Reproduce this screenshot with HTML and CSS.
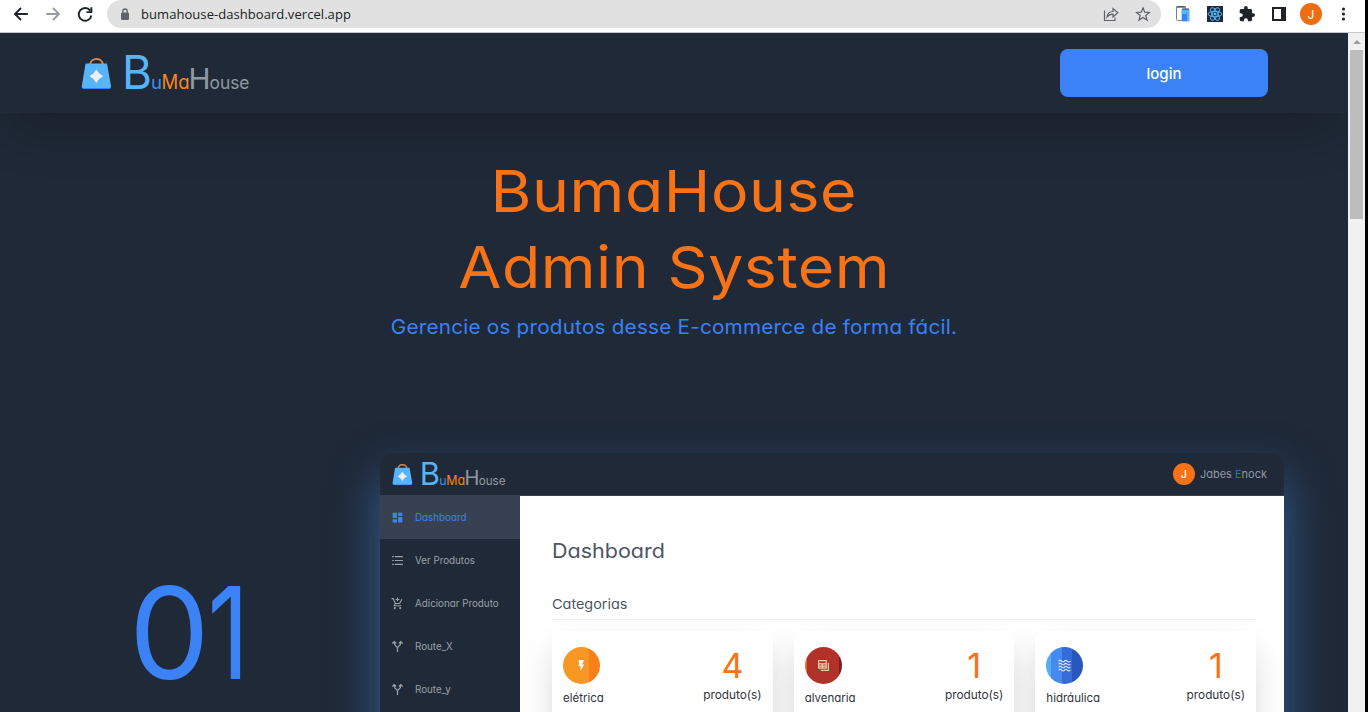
FILE: index.html
```html
<!DOCTYPE html>
<html lang="pt-BR">
<head>
<meta charset="utf-8">
<title>BumaHouse</title>
<link rel="stylesheet" href="styles.css">
</head>
<body>
<div class="window">
  <div class="view">
    <div class="toolbar">
      <svg class="nav" viewBox="0 0 24 24"><path d="M21 12H4M12 4l-8 8 8 8"/></svg>
      <svg class="nav off" viewBox="0 0 24 24"><path d="M3 12h17M12 4l8 8-8 8"/></svg>
      <svg class="nav" viewBox="0 0 24 24"><path d="M19 7.500A8.500 8.500 0 1 0 20.500 14M20.500 3v6.500H14"/></svg>
      <div class="address">
        <svg class="lock" viewBox="0 0 10 13"><rect x="1" y="4.500" width="8" height="7.500" rx="1" fill="#5f6368"/><path d="M2.800 5V3.200a2.200 2.200 0 0 1 4.400 0V5" fill="none" stroke="#5f6368" stroke-width="1.300"/></svg>
        <span class="url">bumahouse-dashboard.vercel.app</span>
        <svg class="tool" viewBox="0 0 16 16"><path d="M1.500 4.500v10h10.500v-3M4 11c.500-4 3-5.500 6-5.500V2.500l4.800 4.300L10 11V8.200C7.500 8.200 5.500 9 4 11z"/></svg>
        <svg class="tool" viewBox="0 0 16 16"><path d="M8 1.800l1.700 4.400 4.700.3-3.600 3 1.200 4.600L8 11.500l-4 2.600 1.200-4.600-3.600-3 4.700-.3z"/></svg>
      </div>
      <div class="extensions">
        <svg viewBox="0 0 16 16"><rect x="1.500" y=".5" width="9" height="14" rx="1" fill="#fff" stroke="#7a8087"/><path d="M1.500 1h9" stroke="#38434d" stroke-width="1.200"/><rect x="6.500" y="3" width="8" height="12.500" rx="1" fill="#57b4f7"/><path d="M7 8v7h5V8" fill="#3b82f6"/><path d="M7 3h7" stroke="#38434d"/></svg>
        <svg viewBox="0 0 16 16"><rect width="16" height="16" fill="#1f2937"/><g fill="none" stroke="#57b4f7" stroke-width="1"><ellipse cx="8" cy="8" rx="7" ry="2.700"/><ellipse cx="8" cy="8" rx="7" ry="2.700" transform="rotate(60 8 8)"/><ellipse cx="8" cy="8" rx="7" ry="2.700" transform="rotate(120 8 8)"/></g><circle cx="8" cy="8" r="1.400" fill="#57b4f7"/></svg>
        <svg viewBox="1 1 22 22"><path fill="#1f2328" d="M20.500 11H19V7c0-1.100-.9-2-2-2h-4V3.500a2.500 2.500 0 0 0-5 0V5H4c-1.100 0-2 .9-2 2v3.800h1.500a2.700 2.700 0 0 1 0 5.400H2V20c0 1.100.9 2 2 2h3.800v-1.500a2.700 2.700 0 0 1 5.400 0V22H17c1.100 0 2-.9 2-2v-4h1.500a2.500 2.500 0 0 0 0-5z"/></svg>
        <svg viewBox="0 0 16 16"><rect x="2" y="2" width="12" height="12" fill="#fff" stroke="#1f2328" stroke-width="2"/><path d="M10 1h5v14h-5z" fill="#1f2328"/></svg>
        <span class="avatar chrome">J</span>
        <svg viewBox="0 0 16 16" fill="#1f2328"><circle cx="8.500" cy="3" r="1.600"/><circle cx="8.500" cy="8" r="1.600"/><circle cx="8.500" cy="13" r="1.600"/></svg>
      </div>
    </div>
    <div class="content">
      <div class="page">
        <header class="header">
          <svg class="brand" viewBox="0 0 172 40">
            <path d="M12 13C12.500 5 24.500 5 25 13" fill="none" stroke="#d9874b" stroke-width="2"/>
            <path d="M7.500 11.500H29L33 34Q33 37 30 37H6.500Q3.500 37 3.800 34Z" fill="#57b4f7"/>
            <path d="M5 36.500H32" stroke="#3b82f6"/>
            <path d="M18.300 17.500Q20.500 22 25.200 24.300Q20.500 26.500 18.300 31Q16 26.500 11.500 24.300Q16 22 18.300 17.500Z" fill="#eceef1"/>
            <text x="44" y="37" font-size="46" class="wb" textLength="30" lengthAdjust="spacingAndGlyphs">B</text>
            <text x="73" y="37" font-size="18" class="wu" textLength="11" lengthAdjust="spacingAndGlyphs">u</text>
            <text x="83.500" y="37" font-size="19.500" class="wm" textLength="28" lengthAdjust="spacingAndGlyphs">Ma</text>
            <text x="110.500" y="37" font-size="29" class="wh" textLength="22" lengthAdjust="spacingAndGlyphs">H</text>
            <text x="131.500" y="37" font-size="18" class="wh" textLength="40" lengthAdjust="spacingAndGlyphs">ouse</text>
          </svg>
          <button class="login">login</button>
        </header>
        <section class="hero">
          <h1><span class="l1">BumaHouse</span><span class="l2">Admin System</span></h1>
          <p>Gerencie os produtos desse E-commerce de forma fácil.</p>
        </section>
        <section class="feature">
          <div class="step"><span>0</span><span class="one">1</span></div>
          <div class="mock">
            <div class="mock-head">
              <svg class="brand-small" viewBox="0 0 172 40">
                <path d="M12 13C12.500 5 24.500 5 25 13" fill="none" stroke="#d9874b" stroke-width="2"/>
                <path d="M7.500 11.500H29L33 34Q33 37 30 37H6.500Q3.500 37 3.800 34Z" fill="#57b4f7"/>
                <path d="M5 36.500H32" stroke="#3b82f6"/>
                <path d="M18.300 17.500Q20.500 22 25.200 24.300Q20.500 26.500 18.300 31Q16 26.500 11.500 24.300Q16 22 18.300 17.500Z" fill="#eceef1"/>
                <text x="44" y="37" font-size="46" class="wb" textLength="30" lengthAdjust="spacingAndGlyphs">B</text>
                <text x="73" y="37" font-size="18" class="wu" textLength="11" lengthAdjust="spacingAndGlyphs">u</text>
                <text x="83.500" y="37" font-size="19.500" class="wm" textLength="28" lengthAdjust="spacingAndGlyphs">Ma</text>
                <text x="110.500" y="37" font-size="29" class="wh" textLength="22" lengthAdjust="spacingAndGlyphs">H</text>
                <text x="131.500" y="37" font-size="18" class="wh" textLength="40" lengthAdjust="spacingAndGlyphs">ouse</text>
              </svg>
              <div class="user"><span class="avatar">J</span><span class="name">Jabes <span class="letter">E</span>nock</span></div>
            </div>
            <div class="mock-body">
              <nav class="side">
                <a class="active"><svg viewBox="0 0 24 24" fill="currentColor"><path d="M3 13h8V3H3zM3 21h8v-6H3zM13 21h8V11h-8zM13 3v6h8V3z"/></svg><span>Dashboard</span></a>
                <a><svg viewBox="0 0 24 24"><path d="M2 5h3M7 5h15M2 12h3M7 12h15M2 19h3M7 19h15" stroke="currentColor" stroke-width="2.200"/></svg><span>Ver Produtos</span></a>
                <a><svg viewBox="0 0 24 24"><path d="M1 3h3l4 9h8l4-8M8 12l-2 4h13M12 1v7M8.500 4.500h7" fill="none" stroke="currentColor" stroke-width="2"/><circle cx="7" cy="20.500" r="2" fill="currentColor"/><circle cx="17" cy="20.500" r="2" fill="currentColor"/></svg><span>Adicionar Produto</span></a>
                <a><svg viewBox="0 0 24 24"><path d="M12 22v-7c0-4-6-3-6-10M12 15c0-4 6-3 6-10M2.500 6.500L6 3l3.500 3.500M14.500 6.500L18 3l3.500 3.500" fill="none" stroke="currentColor" stroke-width="2.200"/></svg><span>Route_X</span></a>
                <a><svg viewBox="0 0 24 24"><path d="M12 22v-7c0-4-6-3-6-10M12 15c0-4 6-3 6-10M2.500 6.500L6 3l3.500 3.500M14.500 6.500L18 3l3.500 3.500" fill="none" stroke="currentColor" stroke-width="2.200"/></svg><span>Route_y</span></a>
              </nav>
              <main class="panel">
                <h2><span>Dashboard</span></h2>
                <h3><span>Categorias</span></h3>
                <div class="cards">
                  <article class="card">
                    <div class="kind"><i class="badge power"><svg viewBox="0 0 24 24"><path d="M7 2v11h3v9l7-12h-4l4-8z" fill="#fff"/></svg></i><span>elétrica</span></div>
                    <div class="count"><b>4</b><span>produto(s)</span></div>
                  </article>
                  <article class="card">
                    <div class="kind"><i class="badge brick"><svg viewBox="0 0 24 24" fill="none" stroke="#f3cfae" stroke-width="2.200"><path d="M3 3h14v14H3zM3 9h14M10 9v8M3 13h14M21 7v14H7"/></svg></i><span>alvenaria</span></div>
                    <div class="count"><b>1</b><span>produto(s)</span></div>
                  </article>
                  <article class="card">
                    <div class="kind"><i class="badge water"><svg viewBox="0 0 24 24" fill="none" stroke="#dcebfd" stroke-width="2"><path d="M1 4q3-3 6 0t5 0 5 0 6 0M1 9.500q3-3 6 0t5 0 5 0 6 0M1 15q3-3 6 0t5 0 5 0 6 0M1 20.500q3-3 6 0t5 0 5 0 6 0"/></svg></i><span>hidráulica</span></div>
                    <div class="count"><b>1</b><span>produto(s)</span></div>
                  </article>
                </div>
              </main>
            </div>
          </div>
        </section>
      </div>
      <div class="scrollbar"><i class="up"></i><i class="thumb"></i></div>
    </div>
  </div>
</div>
</body>
</html>
```
FILE: styles.css
```css
* { box-sizing: border-box; }
body { margin: 0; font-family: Inter, sans-serif; font-feature-settings: "cv11"; }
svg { display: block; flex: none; }
h1, h2, h3, p { margin: 0; font-weight: 400; }

.window { width: 1368px; height: 712px; overflow: hidden; background: #000; padding-right: 3px; }
.view { height: 712px; display: flex; flex-direction: column; }

.toolbar { height: 33px; flex: none; background: #fff; border-bottom: 1px solid #c4c7ca; display: flex; align-items: flex-start; padding-left: 12px; }
.nav { width: 18px; height: 18px; margin: 5px 14px 0 0; fill: none; stroke: #1f2328; stroke-width: 2.500; }
.nav.off { stroke: #979ca2; }
.address { margin-left: -1px; width: 1054px; height: 28px; background: #e1e1e1; border-radius: 14px; display: flex; align-items: center; padding: 0 10px 0 13px; }
.lock { width: 10px; height: 13px; }
.url { flex: 1; margin-left: 11px; font: 13px/28px "Open Sans", sans-serif; letter-spacing: .060px; color: #202124; }
.tool { width: 16px; height: 16px; margin-left: 16px; fill: none; stroke: #5f6368; stroke-width: 1.200; }
.extensions { display: flex; align-items: center; height: 28px; gap: 16px; margin-left: 14px; }
.extensions svg { width: 16px; height: 16px; }
.avatar { width: 22px; height: 22px; border-radius: 50%; background: #f97316; color: #fff; display: flex; align-items: center; justify-content: center; font-size: 10px; font-weight: 500; }
.avatar.chrome { background: #ed6c14; margin: 0 -3px; font-size: 12px; font-weight: 400; }

.content { flex: 1; min-height: 0; display: flex; }
.page { width: 1348px; flex: none; background: #1f2937; overflow: hidden; }
.scrollbar { width: 17px; background: #f1f1f1; display: flex; flex-direction: column; align-items: center; }
.up { width: 0; height: 0; margin: 7px 0 6px; border: 4px solid transparent; border-top: 0; border-bottom-color: #9a9da1; }
.thumb { width: 13px; height: 169px; background: #bdbdbd; }

.header { height: 80px; display: flex; align-items: center; justify-content: space-between; padding: 0 80px 0 78px; background: #1f2937; box-shadow: 0 25px 50px -12px rgba(0, 0, 0, .25); }
.brand { width: 172px; height: 40px; margin-bottom: 2px; overflow: visible; }
.wb { fill: #57b4f7; font-weight: 400; }
.wu { fill: #3b8ef6; }
.wm { fill: #f9861c; font-weight: 400; }
.wh { fill: #9199a3; font-weight: 400; }
.login { width: 208px; height: 48px; border: 0; border-radius: 8px; background: #3b82f6; color: #fff; font: 500 15px Inter, sans-serif; }

.hero { text-align: center; padding-top: 40px; height: 340px; color: #f97316; }
.hero h1 { font-size: 58px; line-height: 76px; display: flex; flex-direction: column; align-items: center; }
.l1, .l2 { letter-spacing: .500px; transform: scaleX(1.079); }
.hero p { color: #3b82f6; font-size: 19.500px; line-height: 30px; margin-top: 7px; letter-spacing: .200px; transform: scaleX(1.062); }

.feature { display: flex; }
.step { width: 380px; display: flex; padding: 102px 0 0 129px; font-size: 128px; line-height: 155px; color: #3b82f6; }
.one { transform: scaleX(.8); transform-origin: right; margin-left: -13px; }
.mock { width: 904px; height: 600px; border-radius: 14px 14px 0 0; background: #1f2937; box-shadow: 0 25px 50px rgba(66, 140, 230, .55); }
.mock-head { height: 43px; display: flex; align-items: center; justify-content: space-between; padding: 0 17px 0 10px; border-bottom: 1px solid #374151; }
.brand-small { width: 116px; height: 27px; margin-bottom: 2px; overflow: visible; }
.user { display: flex; align-items: center; gap: 5px; color: #8f98a5; font-size: 11px; }
.letter { color: #3b62c8; }
.mock-body { display: flex; height: 557px; }
.side { width: 140px; }
.side a { height: 43px; display: flex; align-items: center; padding-left: 11px; gap: 11px; color: #9aa1ab; font-size: 9.800px; }
.side svg { width: 13px; height: 13px; }
.side .active { background: #374151; color: #3b82f6; }
.panel { flex: 1; background: #fff; padding: 38px 28px 0 32px; }
.panel h2 { font-size: 20px; line-height: 34px; color: #4b5563; }
.panel h2 span, .panel h3 span { display: inline-block; transform-origin: left; }
.panel h2 span { transform: scaleX(1.075); }
.panel h3 { font-size: 13px; line-height: 20px; margin-top: 26px; padding-bottom: 5px; color: #4b5563; border-bottom: 1px solid #eceef0; }
.panel h3 span { transform: scaleX(1.11); }
.cards { display: grid; grid-template-columns: repeat(3, 1fr); gap: 21px; margin-top: 11px; }
.card { height: 110px; border-radius: 6px; background: #fff; display: flex; justify-content: space-between; padding: 16px 11px; box-shadow: 0 17px 34px -4px rgba(0, 0, 0, .18); color: #2f343b; font-size: 11.500px; }
.badge { width: 37px; height: 37px; border-radius: 50%; display: flex; align-items: center; justify-content: center; margin-bottom: 7px; }
.badge svg { width: 13px; height: 13px; }
.power { background: linear-gradient(90deg, #f79824 69%, #f97f1b 69%); }
.brick { background: linear-gradient(90deg, #e66b18 6%, #b23129 6% 93%, #7f1d1d 93%); }
.water { background: linear-gradient(90deg, #4fb0f5 13%, #458af0 13% 43%, #366bd8 43% 69%, #2858bd 69%); }
.kind span { line-height: 14px; display: block; }
.count { text-align: center; }
.count b { display: block; font-weight: 400; font-size: 34px; line-height: 40px; margin-top: -1px; color: #f97316; }
.count span { display: block; line-height: 14px; margin-top: 2px; font-size: 11.800px; }
```
